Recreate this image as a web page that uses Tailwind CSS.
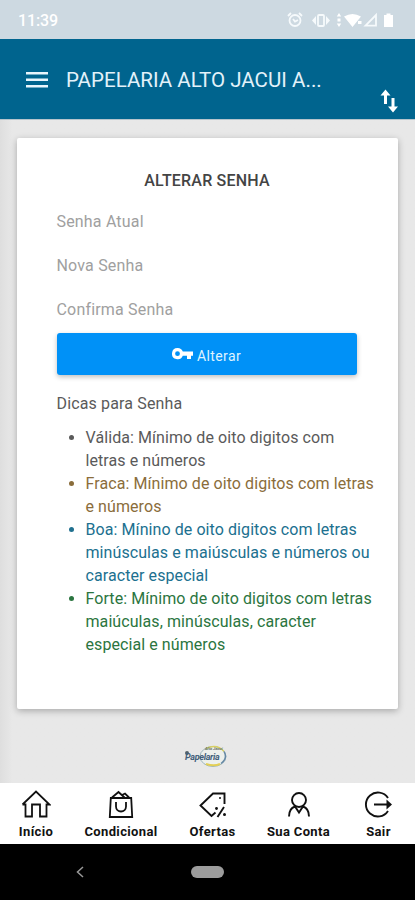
<!DOCTYPE html>
<html lang="pt-BR">
<head>
<meta charset="utf-8">
<meta name="viewport" content="width=device-width, initial-scale=1">
<title>Alterar Senha</title>
<script src="https://cdn.jsdelivr.net/npm/@tailwindcss/browser@4"></script>
</head>
<body class="h-[900px] w-[415px] overflow-hidden bg-[#e8e8e8] font-['Roboto',sans-serif]">
<div class="flex h-full flex-col">
  <!-- Status bar -->
  <div class="flex h-[39px] shrink-0 items-center justify-between bg-[#cdd9e1] pl-[18px] pr-[17px] text-white">
    <span class="mt-[2px] text-base font-medium tracking-[-0.1px]">11:39</span>
    <svg class="h-[18px] w-[112px]" viewBox="0 0 112 18" fill="none" stroke="#f6fafc" stroke-width="1.8">
      <circle cx="9" cy="9.500" r="5.500"/><path d="M2 5l3-3M16 5l-3-3M7 8l2 2.500 3-1.500" />
      <rect x="32" y="4" width="6" height="11" rx="1"/><path d="M30 5l-4 4.500 4 4.500zM40 5l4 4.500-4 4.500z" fill="#f6fafc" stroke="none"/>
      <path d="M53 2l2.200 3.500h-4.400zM51.500 7.500h3v3h-3zM53 16l2.200-3.500h-4.400z" fill="#fff" stroke="none"/>
      <path d="M58 5.500q8.500-5 17 0l-8.500 10.500zM72 10h3.500v3H72z" fill="#fff" stroke="none"/>
      <path d="M79.500 14.700L90 4v10.700z"/>
      <path d="M98 4h2.500V2.500h4V4h2.500v12h-9z" fill="#fff" stroke="none"/>
    </svg>
  </div>
  <!-- App bar -->
  <header class="flex h-[81px] shrink-0 items-start border-b border-[#b5c4cc] bg-[#00648e] text-white">
    <svg class="ml-[26px] mt-[33px] h-[16px] w-[22px]" viewBox="0 0 22 16" fill="#e8f5fc"><path d="M0 0h22v2.500H0zM0 6.500h22V9H0zM0 13h22v2.500H0z"/></svg>
    <h1 class="ml-[18px] mt-[27px] w-[270px] whitespace-nowrap text-[20.500px] leading-[28px] text-[#e3f2fa] tracking-[0.03px]">PAPELARIA ALTO JACUI A...</h1>
    <svg class="ml-[44px] mt-[50px] h-[24px] w-[18px]" viewBox="0 0 18 24" fill="none" stroke="#fff" stroke-width="3"><path d="M5.500 15V5M13 9v11"/><path d="M.5 6.500l5-6 5 6zM8 17.500l5 6 5-6z" fill="#fff" stroke="none"/></svg>
  </header>
  <!-- Password form -->
  <main class="flex h-[663px] shrink-0 flex-col items-center bg-linear-to-r from-[#dedede] from-0% via-[#e8e8e8] via-3% to-[#e8e8e8] pr-px pt-[18px]">
    <section class="h-[571px] w-[381px] rounded-[2px] bg-white px-[40px] pt-[31px] text-[16px] leading-[23px] tracking-[0.08px] text-[#5a5a5a] shadow-[0_2px_7px_rgba(0,0,0,0.28)]">
      <h2 class="text-center font-medium text-[#444] tracking-[0.2px]">ALTERAR SENHA</h2>
      <div class="mt-[18px] flex flex-col gap-[21px] tracking-[0.18px] text-[#a0a0a0]">
        <div>Senha Atual</div>
        <div>Nova Senha</div>
        <div>Confirma Senha</div>
      </div>
      <button class="mt-[12px] flex h-[42px] w-[300px] items-center justify-center gap-[4px] rounded-[3px] bg-[#0091f7] text-[14px] tracking-[0.4px] text-[#dff3ff] shadow-[0_2px_5px_rgba(0,0,0,0.25)]">
        <svg class="h-[12px] w-[21px]" viewBox="0 0 21 12" fill="#fff" fill-rule="evenodd"><path d="M5.500 0a5.600 5.600 0 1 0 5.300 7.700H15V11h4V7.700h2V3.600H10.800A5.600 5.600 0 0 0 5.500 0zm0 3.300a2.400 2.400 0 1 1 0 4.800 2.400 2.400 0 0 1 0-4.800z"/></svg>
        <span class="mt-[5px]">Alterar</span>
      </button>
      <p class="mt-[17px] tracking-[0.15px]">Dicas para Senha</p>
      <ul class="mt-[11px] -mr-[30px] list-disc pl-[29px]">
        <li>Válida: Mínimo de oito digitos com<br>letras e números</li>
        <li class="text-[#8a6d3b]">Fraca: Mínimo de oito digitos com letras<br>e números</li>
        <li class="text-[#20708f]">Boa: Mínino de oito digitos com letras<br>minúsculas e maiúsculas e números ou<br>caracter especial</li>
        <li class="text-[#2b7540]">Forte: Mínimo de oito digitos com letras<br>maiúculas, minúsculas, caracter<br>especial e números</li>
      </ul>
    </section>
    <!-- Store logo -->
    <div class="relative mt-[35px] h-[24px] w-[44px]">
      <svg class="absolute inset-0" viewBox="0 0 44 24" fill="none"><ellipse cx="28" cy="12.500" rx="13" ry="10" fill="#edf0ec" stroke="#9ab5bd"/><path d="M21 4.500q11-5 18 3" stroke="#d9cf63" stroke-width="1.500"/><path d="M39 7.500q4 7-3 12" stroke="#6688a5" stroke-width="1.500"/><path d="M21 20q8 2.500 14 0" stroke="#e3cf55" stroke-width="2"/><circle cx="2" cy="9" r="2" fill="#53616a"/></svg>
      <span class="absolute left-0 top-[8px] text-[9px] font-bold italic leading-[10px] tracking-[-0.3px] text-[#435f7b]">Papelaria</span>
      <span class="absolute left-[20px] top-[3px] whitespace-nowrap text-[4px] font-bold italic leading-[4px] text-[#66736b]">Alto Jacuí</span>
    </div>
  </main>
  <!-- Bottom tabs -->
  <nav class="flex h-[61px] shrink-0 items-start whitespace-nowrap bg-white pl-[10px] pt-[6px] text-[13px] font-bold leading-[18px] tracking-[0.35px] text-[#111]">
    <div class="flex w-[52px] flex-col items-center gap-[4px]">
      <svg class="h-[30px] w-[30px]" viewBox="0 0 30 30" fill="none" stroke="#111" stroke-width="1.800"><path d="M1.500 15.500L15 2.500l13.500 13H25.500V27.500H19v-12h-8v12H4.500v-12H1.500"/></svg>
      <span>Início</span>
    </div>
    <div class="flex w-[118px] flex-col items-center gap-[4px]">
      <svg class="h-[30px] w-[30px]" viewBox="0 0 30 30" fill="none" stroke="#111" stroke-width="1.800"><path d="M4.800 9h20.400l1 19H3.800zM6 8.500L12.500 3l6 5.500M16 6l3-1.500 4 4M10 13v4.500a5 5 0 0 0 10 0V13"/></svg>
      <span>Condicional</span>
    </div>
    <div class="flex w-[65px] flex-col items-center gap-[4px]">
      <svg class="h-[30px] w-[30px]" viewBox="0 0 30 30" fill="none" stroke="#111" stroke-width="1.900"><path d="M26.500 15V4.500H15L2.500 16.500l11 10.500 4-3.500M19.500 28l6.500-10"/><circle cx="22" cy="9" r="1" fill="#111" stroke="none"/><circle cx="18.500" cy="19.500" r="1.400" fill="#111" stroke="none"/><circle cx="26.500" cy="25.500" r="1.500" fill="#111" stroke="none"/></svg>
      <span>Ofertas</span>
    </div>
    <div class="flex w-[107px] flex-col items-center gap-[4px]">
      <svg class="h-[30px] w-[30px]" viewBox="0 0 30 30" fill="none" stroke="#111" stroke-width="1.900"><circle cx="15" cy="11" r="7"/><path d="M5 27.500q0-8 6-10l4 6 4-6q6 2 6 10"/></svg>
      <span>Sua Conta</span>
    </div>
    <div class="flex w-[53px] flex-col items-center gap-[4px]">
      <svg class="h-[30px] w-[30px]" viewBox="0 0 30 30" fill="none" stroke="#111" stroke-width="1.900"><path d="M24 9a12 12 0 1 0 0 13M10 15.500h15"/><path d="M22.500 10.500l5.500 5-5.500 5z" fill="#111" stroke="none"/></svg>
      <span>Sair</span>
    </div>
  </nav>
  <!-- System navigation -->
  <div class="flex h-[56px] shrink-0 items-center bg-black">
    <svg class="ml-[76px] h-[12px] w-[8px]" viewBox="0 0 8 12" fill="none" stroke="#999" stroke-width="1.500"><path d="M7 1L1.500 6 7 11"/></svg>
    <div class="ml-[107px] h-[12px] w-[33px] rounded-full bg-[#9c9c9c]"></div>
  </div>
</div>
</body>
</html>
